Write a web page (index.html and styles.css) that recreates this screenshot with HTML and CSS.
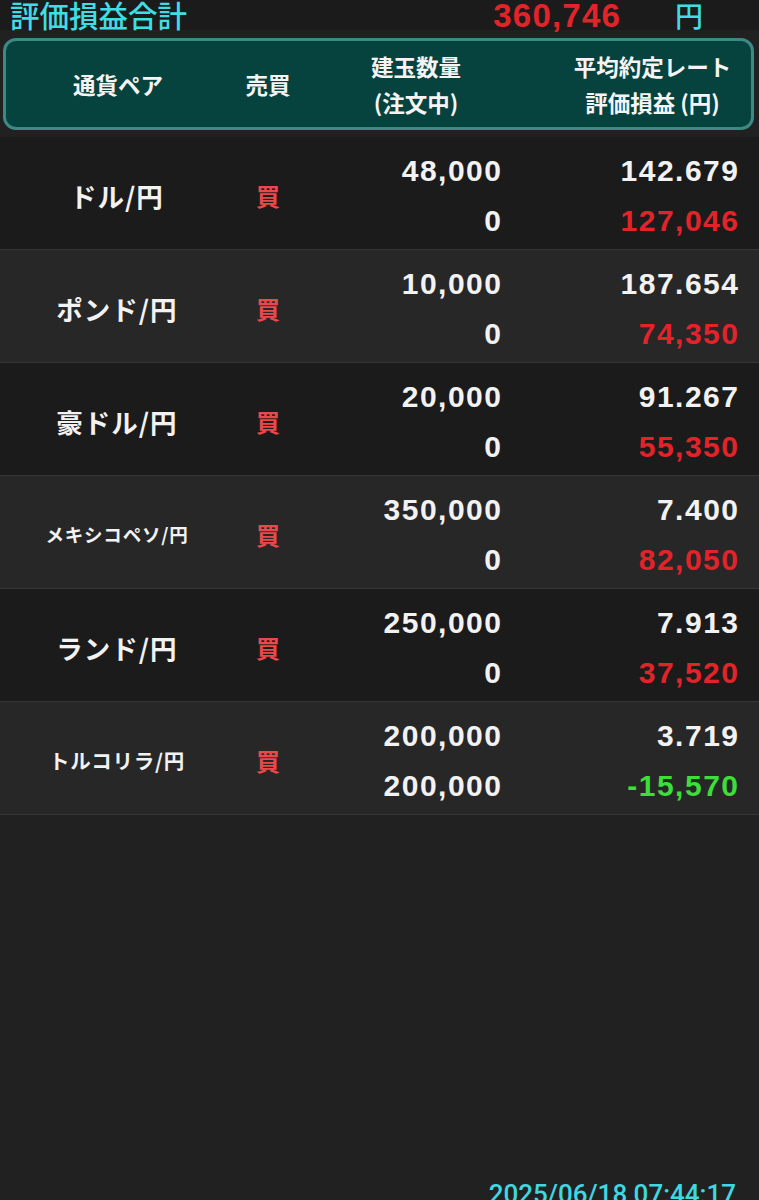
FILE: index.html
```html
<!DOCTYPE html>
<html lang="ja">
<head>
<meta charset="utf-8">
<link rel="stylesheet" href="styles.css">
</head>
<body>
<div class="screen">
  <div class="summary">
    <span class="summary-label">評価損益合計</span>
    <span class="summary-value">360,746</span>
    <span class="summary-unit">円</span>
  </div>
  <div class="head">
    <div class="hcell c1">通貨ペア</div>
    <div class="hcell c2">売買</div>
    <div class="hcell c3"><span>建玉数量</span><span>(注文中)</span></div>
    <div class="hcell c4"><span class="h-rate">平均約定レート</span><span>評価損益 (円)</span></div>
  </div>
  <div class="rows">
    <div class="row dark">
      <div class="name">ドル/円</div>
      <div class="side">買</div>
      <div class="nums"><span>48,000</span><span>0</span></div>
      <div class="nums"><span>142.679</span><span class="loss">127,046</span></div>
    </div>
    <div class="row light">
      <div class="name">ポンド/円</div>
      <div class="side">買</div>
      <div class="nums"><span>10,000</span><span>0</span></div>
      <div class="nums"><span>187.654</span><span class="loss">74,350</span></div>
    </div>
    <div class="row dark">
      <div class="name">豪ドル/円</div>
      <div class="side">買</div>
      <div class="nums"><span>20,000</span><span>0</span></div>
      <div class="nums"><span>91.267</span><span class="loss">55,350</span></div>
    </div>
    <div class="row light">
      <div class="name small">メキシコペソ/円</div>
      <div class="side">買</div>
      <div class="nums"><span>350,000</span><span>0</span></div>
      <div class="nums"><span>7.400</span><span class="loss">82,050</span></div>
    </div>
    <div class="row dark">
      <div class="name">ランド/円</div>
      <div class="side">買</div>
      <div class="nums"><span>250,000</span><span>0</span></div>
      <div class="nums"><span>7.913</span><span class="loss">37,520</span></div>
    </div>
    <div class="row light">
      <div class="name mid">トルコリラ/円</div>
      <div class="side">買</div>
      <div class="nums"><span>200,000</span><span>200,000</span></div>
      <div class="nums"><span>3.719</span><span class="gain">-15,570</span></div>
    </div>
  </div>
  <div class="spacer"></div>
  <div class="stamp">2025/06/18 07:44:17</div>
</div>
</body>
</html>
```

FILE: styles.css
```css
html, body {
  margin: 0;
  padding: 0;
  background: #212121;
}
.screen {
  width: 759px;
  height: 1200px;
  display: flex;
  flex-direction: column;
  overflow: hidden;
  color: #f2f2f2;
  font-family: "Noto Sans CJK JP", "Liberation Sans", sans-serif;
}
.summary {
  display: flex;
  align-items: center;
  height: 30px;
  background: #1b1b1b;
  padding-left: 10px;
}
.summary-label {
  color: #3fdde4;
  font-size: 29.5px;
  font-weight: 500;
  line-height: 1;
}
.summary-value {
  color: #e3232a;
  font-family: "Liberation Sans", sans-serif;
  font-size: 33px;
  font-weight: 700;
  line-height: 1;
  margin-left: auto;
  text-align: right;
  letter-spacing: 1.2px;
}
.summary-unit {
  color: #3fdde4;
  font-size: 28px;
  font-weight: 500;
  line-height: 1;
  margin-left: 54px;
  margin-right: 56px;
}
.head {
  margin: 8px 5px 0 3px;
  height: 86px;
  border: 3px solid #3b8a84;
  border-radius: 13px;
  background: #06433f;
  display: grid;
  grid-template-columns: 224px 76px 220px 1fr;
  align-items: center;
}
.hcell {
  font-size: 22.5px;
  font-weight: 700;
  color: #f4f4f4;
  display: flex;
  flex-direction: column;
  align-items: center;
  line-height: 36px;
  text-align: center;
}
.hcell.c4 { padding-left: 28px; }
.rows {
  background: #1b1b1b;
  margin-top: 7px;
}
.row {
  display: grid;
  grid-template-columns: 234px 68px 199px 237px;
  height: 112px;
  border-bottom: 1px solid #353535;
}
.row.dark { background: #1b1b1b; }
.row.light { background: #272727; }
.name {
  display: flex;
  align-items: center;
  justify-content: center;
  font-size: 26.5px;
  font-weight: 700;
  padding-top: 4px;
  letter-spacing: 1px;
}
.name.small { font-size: 18.5px; letter-spacing: 0.8px; }
.name.mid { font-size: 20.5px; letter-spacing: 0.8px; }
.side {
  display: flex;
  align-items: center;
  justify-content: center;
  color: #e9494b;
  font-size: 24px;
  font-weight: 700;
  padding-top: 4px;
}
.nums {
  display: flex;
  flex-direction: column;
  align-items: flex-end;
  padding-top: 9px;
  font-family: "Liberation Sans", sans-serif;
  font-size: 30px;
  font-weight: 700;
  line-height: 50px;
  letter-spacing: 1.5px;
}
.nums span { margin-right: -1.5px; }
.loss { color: #e3232a; }
.gain { color: #3ddd3a; }
.spacer { flex: 1; }
.stamp {
  align-self: flex-end;
  margin-right: 23px;
  color: #3fd8e0;
  font-family: Roboto, "Liberation Sans", sans-serif;
  font-size: 26px;
  line-height: 30px;
  font-weight: 500;
  margin-bottom: -9px;
}
```
